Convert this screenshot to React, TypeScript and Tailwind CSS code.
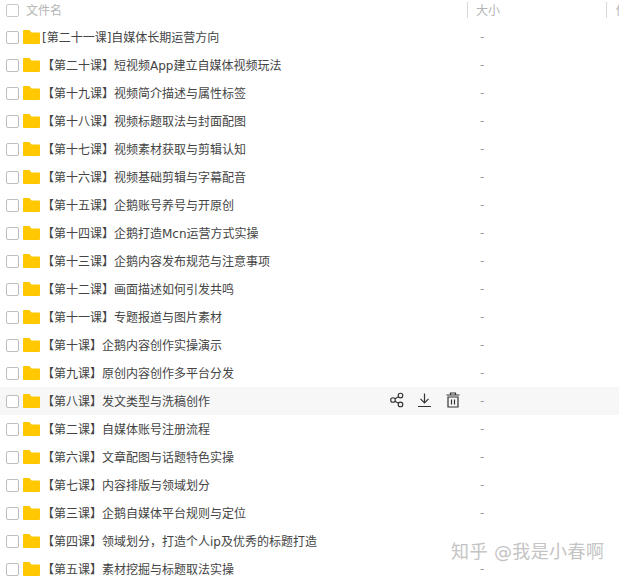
const rows = [
  '[第二十一课]自媒体长期运营方向',
  '【第二十课】短视频App建立自媒体视频玩法',
  '【第十九课】视频简介描述与属性标签',
  '【第十八课】视频标题取法与封面配图',
  '【第十七课】视频素材获取与剪辑认知',
  '【第十六课】视频基础剪辑与字幕配音',
  '【第十五课】企鹅账号养号与开原创',
  '【第十四课】企鹅打造Mcn运营方式实操',
  '【第十三课】企鹅内容发布规范与注意事项',
  '【第十二课】画面描述如何引发共鸣',
  '【第十一课】专题报道与图片素材',
  '【第十课】企鹅内容创作实操演示',
  '【第九课】原创内容创作多平台分发',
  '【第八课】发文类型与洗稿创作',
  '【第二课】自媒体账号注册流程',
  '【第六课】文章配图与话题特色实操',
  '【第七课】内容排版与领域划分',
  '【第三课】企鹅自媒体平台规则与定位',
  '【第四课】领域划分，打造个人ip及优秀的标题打造',
  '【第五课】素材挖掘与标题取法实操',
];

function Folder() {
  return (
    <svg width="17" height="14" viewBox="0 0 17 14" className="shrink-0">
      <path d="M1 0h5.5l2 2.5H16a1 1 0 0 1 1 1V13a1 1 0 0 1-1 1H1a1 1 0 0 1-1-1V1a1 1 0 0 1 1-1z" fill="#ffc800" />
    </svg>
  );
}

function Check() {
  return <div className="size-[13px] shrink-0 rounded-[2px] border border-[#bdbdbd] bg-white" />;
}

function HoverIcons() {
  return (
    <div className="absolute left-[390px] top-[5px] flex items-center gap-[13px] text-[#333]">
      <svg width="14" height="16" viewBox="0 0 14 16" fill="none" stroke="currentColor" strokeWidth="1.1">
        <circle cx="3" cy="8" r="2.3" />
        <circle cx="10.5" cy="3.6" r="2.3" />
        <circle cx="10.5" cy="12.4" r="2.3" />
        <path d="M5 6.8l3.5-2M5 9.2l3.5 2" />
      </svg>
      <svg width="15" height="16" viewBox="0 0 15 16" fill="none" stroke="currentColor" strokeWidth="1.2">
        <path d="M7.5 1.5v9M3.5 6.8l4 4 4-4M1 14.5h13" />
      </svg>
      <svg width="14" height="16" viewBox="0 0 14 16" fill="none" stroke="currentColor" strokeWidth="1.2" className="ml-[1px]">
        <path d="M0.5 3h13M4.5 3V1h5v2M2 5h10v10H2zM5.5 7.5v5M8.5 7.5v5" />
      </svg>
    </div>
  );
}

export default function App() {
  return (
    <div className="relative h-[578px] w-[619px] overflow-hidden bg-white font-['DejaVu_Sans','Noto_Sans_CJK_SC',sans-serif] text-[12px] text-[#444]">
      {/* Header */}
      <div className="mb-[3px] flex h-[20px] items-center whitespace-nowrap text-[#b4b4b4]">
        <div className="ml-[6px] size-[13px] shrink-0 rounded-[2px] border border-[#c8c8c8]" />
        <span className="ml-[7px] w-[441px] shrink-0 pt-[2px]">文件名</span>
        <div className="h-[16px] w-px shrink-0 bg-[#d8d8d8]" />
        <span className="ml-[8px] w-[130px] shrink-0 pt-[2px]">大小</span>
        <div className="h-[16px] w-px shrink-0 bg-[#d8d8d8]" />
        <span className="ml-[9px] shrink-0 pt-[2px]">修</span>
      </div>

      {/* Rows */}
      <div className="flex flex-col">
        {rows.map((name, i) => (
          <div
            key={name}
            className={`relative flex h-[28px] items-center pl-[6px] ${i === 13 ? 'bg-[#f7f7f8]' : ''}`}
          >
            <Check />
            <div className="ml-[4px]">
              <Folder />
            </div>
            <span className="ml-[2px] w-[435px] whitespace-nowrap pt-[2px]">{name}</span>
            {/* dash of row 19 sits under the watermark in the picture */}
            {i !== 18 && <span className="ml-[3px] text-[#999]">-</span>}
            {i === 13 && <HoverIcons />}
          </div>
        ))}
      </div>

      {/* Watermark */}
      <div className="absolute left-[451px] top-[544px] whitespace-nowrap text-[18px] leading-[16px] tracking-[0.4px] text-[#c4c4c4]">知乎 @我是小春啊</div>
    </div>
  );
}
